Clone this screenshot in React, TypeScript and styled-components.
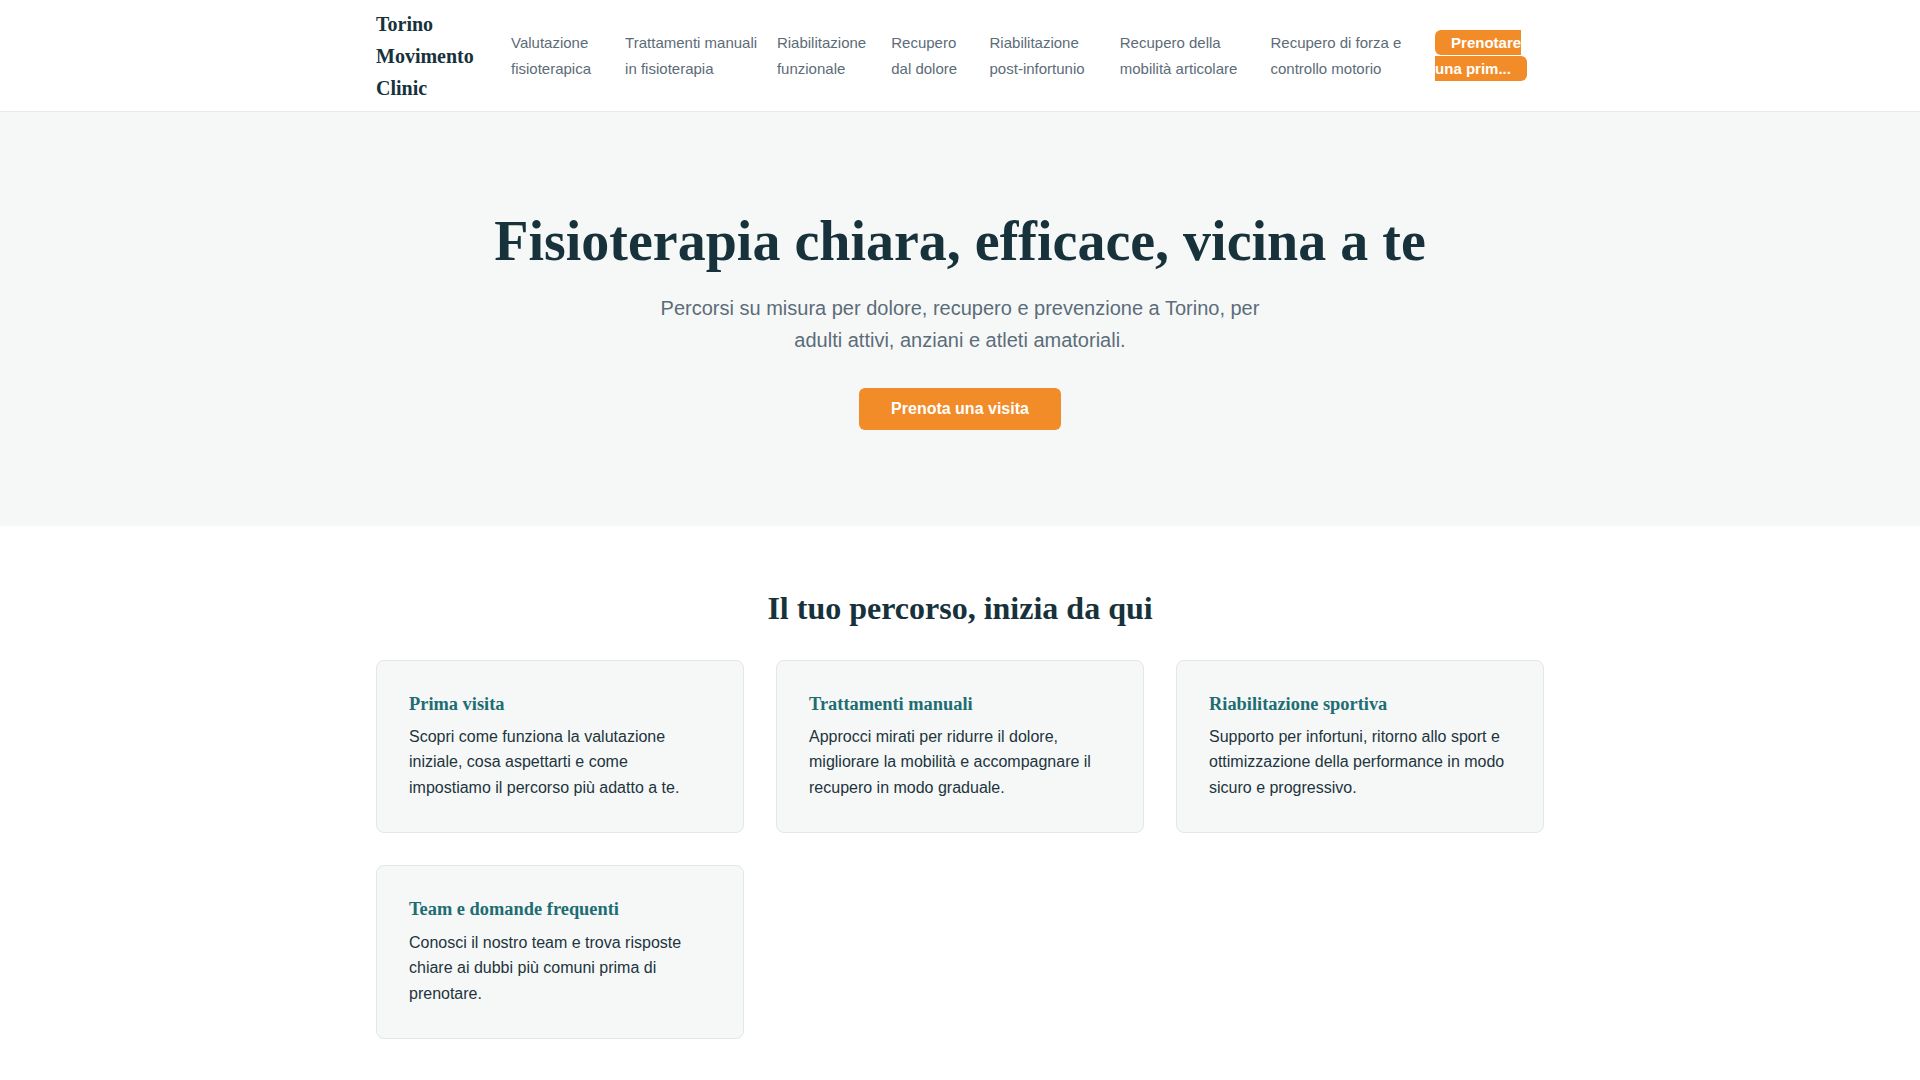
import React from "react";
import styled, { createGlobalStyle } from "styled-components";

const GlobalStyle = createGlobalStyle`
  html, body { margin: 0; padding: 0; background: #ffffff; }
  body {
    font-family: "Liberation Sans", Arial, sans-serif;
    line-height: 1.6;
    color: #22343c;
  }
  * { box-sizing: border-box; }
`;

const HeaderBar = styled.header`
  background: #ffffff;
  border-bottom: 1px solid #e6eaec;
`;

const HeaderInner = styled.div`
  max-width: 1200px;
  margin: 0 auto;
  padding: 8px 16px 7px;
  display: flex;
  align-items: center;
  justify-content: space-between;
  gap: 32px;
`;

const Logo = styled.a`
  flex: 0 0 103px;
  font-family: "Liberation Serif", "Times New Roman", serif;
  font-weight: 700;
  font-size: 20px;
  line-height: 32px;
  color: #17323b;
  text-decoration: none;
`;

const Nav = styled.nav`
  flex: 1 1 auto;
  min-width: 0;
`;

const NavList = styled.ul`
  list-style: none;
  margin: 0;
  padding: 0;
  display: flex;
  align-items: center;
  gap: 17.5px;
`;

const NavItem = styled.li`
  flex: 0 1 auto;
`;

const NavLink = styled.a`
  font-size: 15px;
  line-height: 25.6px;
  color: #5c6c78;
  text-decoration: none;
`;

const NavCta = styled.a`
  font-size: 15px;
  line-height: 25.6px;
  font-weight: 700;
  color: #ffffff;
  background: #f28c28;
  padding: 4px 16px;
  border-radius: 6px;
  text-decoration: none;
`;

const Hero = styled.section`
  background: #f6f8f8;
  padding: 96px 16px;
  text-align: center;
`;

const HeroTitle = styled.h1`
  font-family: "Liberation Serif", "Times New Roman", serif;
  font-weight: 700;
  font-size: 56px;
  line-height: 1.2;
  color: #17323b;
  margin: 0 0 17px;
`;

const HeroText = styled.p`
  font-size: 20px;
  line-height: 1.6;
  color: #5c6c78;
  max-width: 640px;
  margin: 0 auto 32px;
`;

const PrimaryButton = styled.a`
  display: inline-block;
  background: #f28c28;
  color: #ffffff;
  font-size: 16px;
  font-weight: 700;
  line-height: normal;
  padding: 12px 32px;
  border-radius: 6px;
  text-decoration: none;
`;

const Section = styled.section`
  padding: 63px 16px 64px;
`;

const Container = styled.div`
  max-width: 1168px;
  margin: 0 auto;
`;

const SectionTitle = styled.h2`
  font-family: "Liberation Serif", "Times New Roman", serif;
  font-weight: 700;
  font-size: 32px;
  line-height: 1.2;
  color: #17323b;
  text-align: center;
  margin: 0 0 32px;
`;

const CardGrid = styled.div`
  display: grid;
  grid-template-columns: repeat(3, 1fr);
  gap: 32px;
`;

const Card = styled.a`
  display: block;
  background: #f6f8f8;
  border: 1px solid #e3e7e9;
  border-radius: 8px;
  padding: 32px;
  text-decoration: none;
`;

const CardTitle = styled.h3`
  font-family: "Liberation Serif", "Times New Roman", serif;
  font-weight: 700;
  font-size: 18.4px;
  line-height: 1.2;
  color: #1e6d72;
  margin: 0 0 9px;
`;

const CardText = styled.p`
  font-size: 16px;
  line-height: 1.6;
  color: #22343c;
  margin: 0;
`;

const navItems = [
  "Valutazione fisioterapica",
  "Trattamenti manuali in fisioterapia",
  "Riabilitazione funzionale",
  "Recupero dal dolore",
  "Riabilitazione post-infortunio",
  "Recupero della mobilità articolare",
  "Recupero di forza e controllo motorio",
];

const cards = [
  {
    title: "Prima visita",
    text: "Scopri come funziona la valutazione iniziale, cosa aspettarti e come impostiamo il percorso più adatto a te.",
  },
  {
    title: "Trattamenti manuali",
    text: "Approcci mirati per ridurre il dolore, migliorare la mobilità e accompagnare il recupero in modo graduale.",
  },
  {
    title: "Riabilitazione sportiva",
    text: "Supporto per infortuni, ritorno allo sport e ottimizzazione della performance in modo sicuro e progressivo.",
  },
  {
    title: "Team e domande frequenti",
    text: "Conosci il nostro team e trova risposte chiare ai dubbi più comuni prima di prenotare.",
  },
];

export default function App() {
  return (
    <>
      <GlobalStyle />
      <HeaderBar>
        <HeaderInner>
          <Logo href="#">Torino Movimento Clinic</Logo>
          <Nav>
            <NavList>
              {navItems.map((item) => (
                <NavItem key={item}>
                  <NavLink href="#">{item}</NavLink>
                </NavItem>
              ))}
              <NavItem>
                <NavCta href="#">Prenotare una prim...</NavCta>
              </NavItem>
            </NavList>
          </Nav>
        </HeaderInner>
      </HeaderBar>
      <Hero>
        <HeroTitle>Fisioterapia chiara, efficace, vicina a te</HeroTitle>
        <HeroText>
          Percorsi su misura per dolore, recupero e prevenzione a Torino, per
          adulti attivi, anziani e atleti amatoriali.
        </HeroText>
        <PrimaryButton href="#">Prenota una visita</PrimaryButton>
      </Hero>
      <Section>
        <Container>
          <SectionTitle>Il tuo percorso, inizia da qui</SectionTitle>
          <CardGrid>
            {cards.map((c) => (
              <Card key={c.title} href="#">
                <CardTitle>{c.title}</CardTitle>
                <CardText>{c.text}</CardText>
              </Card>
            ))}
          </CardGrid>
        </Container>
      </Section>
    </>
  );
}
